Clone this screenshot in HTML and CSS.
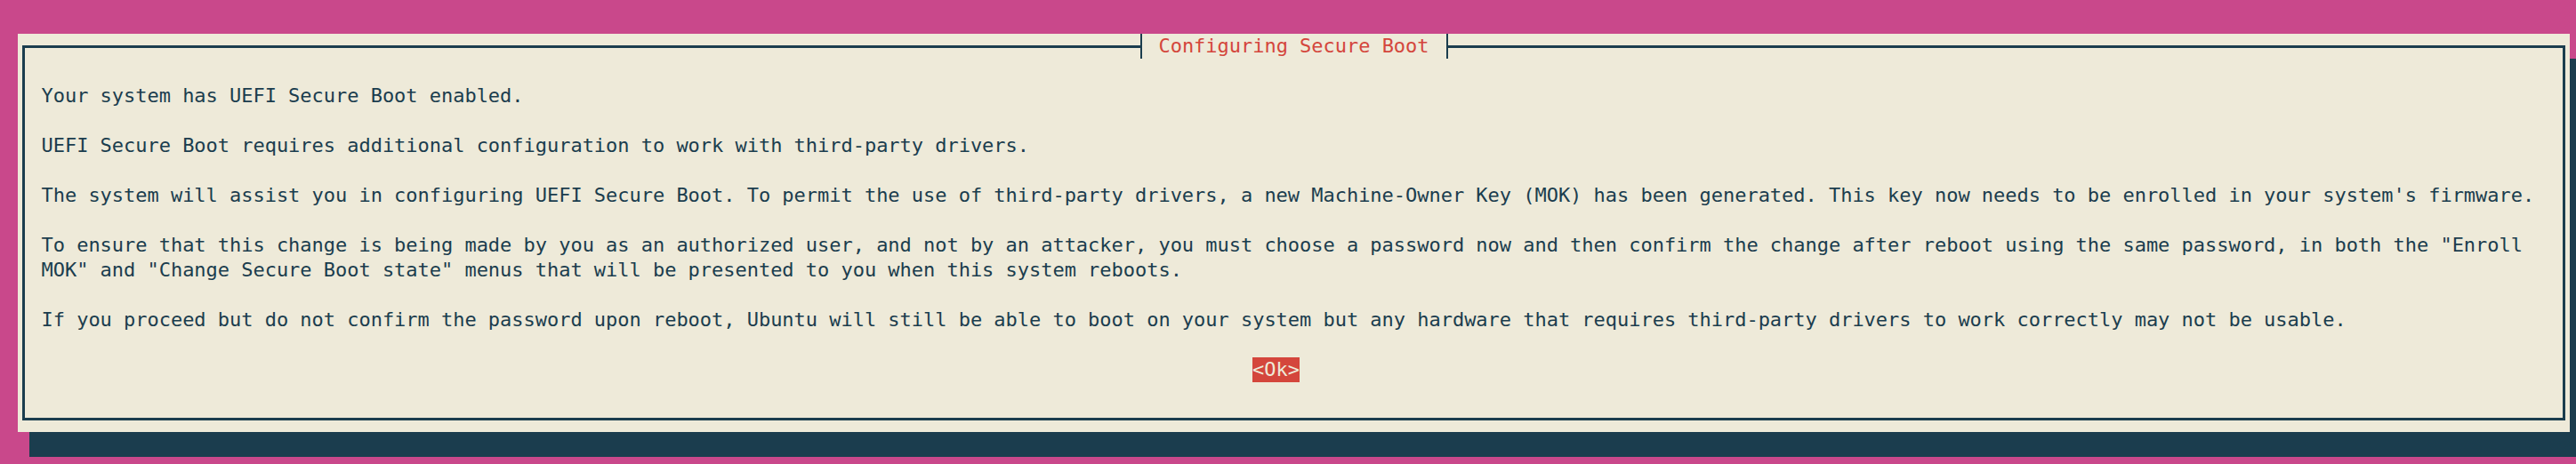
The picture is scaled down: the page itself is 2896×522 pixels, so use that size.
FILE: index.html
```html
<!DOCTYPE html>
<html lang="en">
<head>
<meta charset="utf-8">
<title>Configuring Secure Boot</title>
<link rel="stylesheet" href="styles.css">
</head>
<body>
<div class="screen">
  <div class="dialog">
    <div class="frame">
      <div class="title">Configuring Secure Boot</div>
      <div class="body">
        <p class="para">Your system has UEFI Secure Boot enabled.</p>
        <p class="para">UEFI Secure Boot requires additional configuration to work with third-party drivers.</p>
        <p class="para">The system will assist you in configuring UEFI Secure Boot. To permit the use of third-party drivers, a new Machine-Owner Key (MOK) has been generated. This key now needs to be enrolled in your system's firmware.</p>
        <p class="para"><span class="line">To ensure that this change is being made by you as an authorized user, and not by an attacker, you must choose a password now and then confirm the change after reboot using the same password, in both the "Enroll</span><span class="line">MOK" and "Change Secure Boot state" menus that will be presented to you when this system reboots.</span></p>
        <p class="para">If you proceed but do not confirm the password upon reboot, Ubuntu will still be able to boot on your system but any hardware that requires third-party drivers to work correctly may not be usable.</p>
        <div class="actions"><span class="btn">&lt;Ok&gt;</span></div>
      </div>
    </div>
  </div>
</div>
</body>
</html>
```

FILE: styles.css
```css
html {
  margin: 0;
  padding: 0;
  background: #c9488b;
  overflow: hidden;
}

body {
  margin: 0;
  padding: 0;
  min-height: 522px;
}

.screen {
  padding: 38px 0 0 20px;
}

.dialog {
  width: 2869px;
  height: 448px;
  box-sizing: border-box;
  padding: 13px 5px;
  background: #eeead9;
  box-shadow: 13px 28px 0 #1b3d4e;
  font-family: "DejaVu Sans Mono", "Liberation Mono", monospace;
  font-size: 22px;
  line-height: 28px;
  letter-spacing: -0.025px;
  color: #1b3d4e;
}

.frame {
  position: relative;
  height: 100%;
  box-sizing: border-box;
  border: 3px solid #1b3d4e;
  padding: 40px 0 0 18.5px;
}

.title {
  position: absolute;
  top: -16px;
  left: 50%;
  transform: translateX(-50%);
  width: 346px;
  height: 28px;
  box-sizing: border-box;
  border-left: 2px solid #1b3d4e;
  border-right: 2px solid #1b3d4e;
  background: #eeead9;
  color: #d4463c;
  text-align: center;
  white-space: pre;
}

.para {
  margin: 0 0 28px;
  white-space: pre;
}

.line {
  display: block;
}

.actions {
  height: 28px;
  margin-left: 1361.5px;
}

.btn {
  display: inline-block;
  height: 28px;
  line-height: 28px;
  background: #d4463c;
  color: #eeead9;
}
```
